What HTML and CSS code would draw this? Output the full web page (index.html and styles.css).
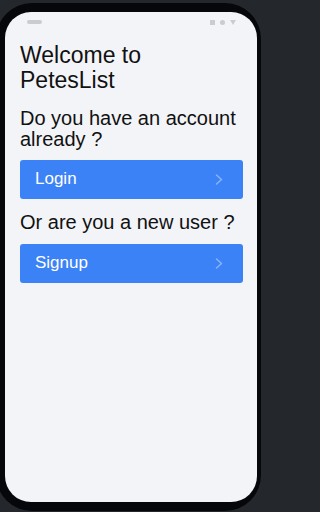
FILE: index.html
```html
<!DOCTYPE html>
<html lang="en">
<head>
<meta charset="utf-8">
<title>PetesList</title>
<link rel="stylesheet" href="styles.css">
</head>
<body>
  <div class="phone">
    <div class="screen">
      <div class="status-bar">
        <span class="pill"></span>
        <span class="status-icons">
          <span class="ico-square"></span>
          <span class="ico-circle"></span>
          <span class="ico-triangle"></span>
        </span>
      </div>
      <main class="content">
        <h1 class="title">Welcome to<br>PetesList</h1>
        <p class="question">Do you have an account already ?</p>
        <button class="action" type="button">
          <span class="action-label">Login</span>
          <svg class="chevron" width="8" height="11" viewBox="0 0 8 11"><polyline points="1.5,1 6.5,5.5 1.5,10" fill="none" stroke="rgba(255,255,255,0.4)" stroke-width="1.5" stroke-linecap="round" stroke-linejoin="round"/></svg>
        </button>
        <p class="question question-2">Or are you a new user ?</p>
        <button class="action action-2" type="button">
          <span class="action-label">Signup</span>
          <svg class="chevron" width="8" height="11" viewBox="0 0 8 11"><polyline points="1.5,1 6.5,5.5 1.5,10" fill="none" stroke="rgba(255,255,255,0.4)" stroke-width="1.5" stroke-linecap="round" stroke-linejoin="round"/></svg>
        </button>
      </main>
    </div>
  </div>
</body>
</html>
```

FILE: styles.css
```css
html, body {
  margin: 0;
  padding: 0;
}

body {
  background: #24272c;
  width: 265px;
  height: 512px;
  overflow: hidden;
  font-family: "Liberation Sans", Arial, sans-serif;
}

.phone {
  box-sizing: border-box;
  width: 265px;
  height: 508px;
  margin: 3px 0 0 -4px;
  padding: 9px 4px 9px 9px;
  background: #05070a;
  border-radius: 36px;
  display: flex;
}

.screen {
  flex: 1;
  background: #f3f4f8;
  border-radius: 26px;
  display: flex;
  flex-direction: column;
  overflow: hidden;
}

.status-bar {
  height: 20px;
  display: flex;
  align-items: center;
  justify-content: space-between;
  padding: 0 21px 0 22px;
}

.pill {
  width: 15px;
  height: 4px;
  border-radius: 2px;
  background: #cbccd1;
}

.status-icons {
  display: flex;
  align-items: center;
  gap: 5px;
}

.ico-square {
  width: 5px;
  height: 5px;
  background: #cbccd1;
}

.ico-circle {
  width: 5px;
  height: 5px;
  border-radius: 50%;
  background: #cbccd1;
}

.ico-triangle {
  width: 0;
  height: 0;
  border-left: 3px solid transparent;
  border-right: 3px solid transparent;
  border-top: 5px solid #cbccd1;
}

.content {
  display: flex;
  flex-direction: column;
  padding: 10.5px 14px 0 15px;
}

.title {
  margin: 0;
  font-size: 23px;
  line-height: 25px;
  font-weight: normal;
  color: #111;
}

.question {
  margin: 15px 0 0;
  font-size: 20px;
  line-height: 21px;
  color: #111;
}

.question-2 {
  margin-top: 13px;
}

.action {
  margin: 10px 0 0;
  height: 39px;
  border: none;
  border-radius: 3px;
  background: #3b82f6;
  color: #fff;
  display: flex;
  align-items: center;
  justify-content: space-between;
  padding: 0 20px 0 15px;
  font-family: inherit;
  cursor: pointer;
}

.action-2 {
  margin-top: 11px;
}

.action-label {
  font-size: 17px;
  line-height: 20px;
}

.chevron {
  display: block;
}
```
